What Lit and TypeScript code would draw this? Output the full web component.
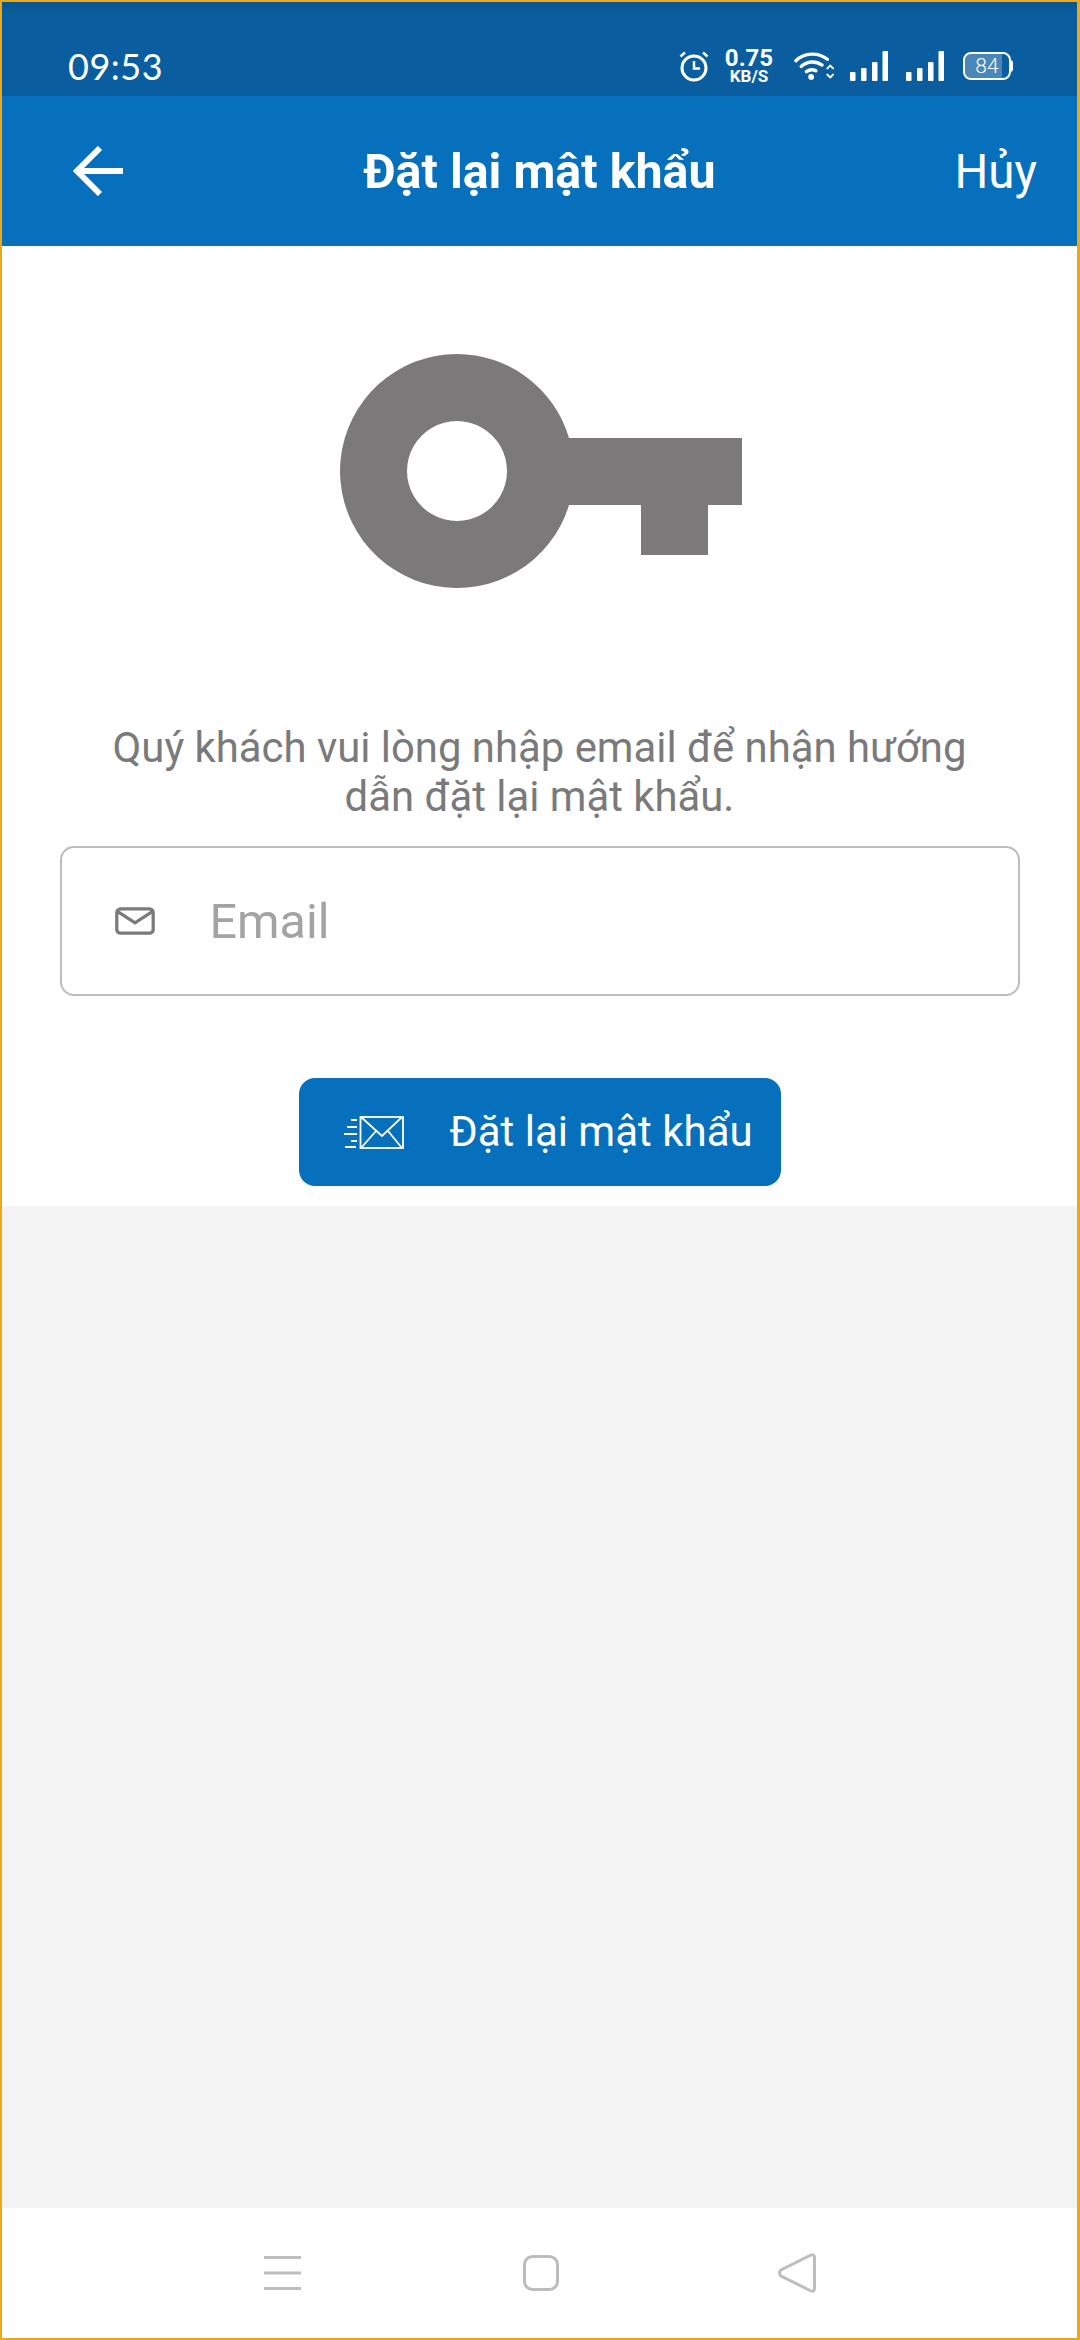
import { LitElement, html, css } from "lit";
import { customElement } from "lit/decorators.js";

@customElement("app-root")
export class AppRoot extends LitElement {
  static styles = css`
    :host { display: block; width: 1080px; height: 2340px; box-sizing: border-box; border: 2px solid #eba91a; border-right-width: 3px; font-family: Roboto, "Liberation Sans", sans-serif; background: #fff; overflow: hidden; }
    .page { display: flex; flex-direction: column; height: 100%; }
    .status { height: 94px; flex: none; background: linear-gradient(#07568f 0, #0a5e9f 14px, #0a5e9f 100%); display: flex; align-items: center; padding: 34px 64px 0 66px; color: #fff; box-sizing: border-box; }
    .time { font-family: Lato, sans-serif; font-size: 36px; letter-spacing: 0.5px; line-height: 1; flex: 1; }
    .status-icons { display: flex; align-items: center; }
    .status-icons svg { display: block; }
    .speed { display: flex; flex-direction: column; align-items: center; font-weight: 700; width: 48px; margin: 0 21px 0 16px; }
    .speed .v { font-size: 24px; height: 21px; line-height: 21px; }
    .speed .u { font-size: 17px; height: 15px; line-height: 15px; }
    .bat { position: relative; width: 50px; height: 28px; margin-left: 19px; }
    .bat-box { box-sizing: border-box; width: 48px; height: 28px; border: 2.5px solid #fff; border-radius: 8px; overflow: hidden; position: relative; display: flex; align-items: center; justify-content: center; font-size: 21px; font-weight: 300; color: #fff; }
    .bat-fill { position: absolute; left: 0; top: 0; bottom: 0; width: 84%; background: rgba(255,255,255,.26); }
    .bat-num { position: relative; line-height: 1; }
    .bat-tip { position: absolute; right: 0; top: 8px; width: 3px; height: 12px; background: #fff; border-radius: 0 3px 3px 0; }
    .bar { height: 150px; flex: none; background: #0770bc; color: #fff; display: flex; align-items: center; justify-content: space-between; padding: 0 40px 0 71px; position: relative; box-sizing: border-box; }
    .bar h1 { margin: 0; font-size: 48.4px; font-weight: 700; position: absolute; left: 0; right: 0; top: 51px; text-align: center; line-height: 50px; pointer-events: none; }
    .cancel { font-size: 47.5px; font-weight: 400; line-height: 50px; margin-top: 2px; }
    .content { background: #fff; flex: none; height: 960px; box-sizing: border-box; display: flex; flex-direction: column; align-items: center; padding-top: 108px; }
    .key { display: block; width: 402px; height: 234px; margin-left: 2px; }
    .desc { margin: 135px 0 0; width: 960px; text-align: center; font-size: 41.85px; line-height: 49px; color: #7a7a7a; }
    .field { margin-top: 25px; width: 960px; height: 150px; box-sizing: border-box; border: 2px solid #bdbdbd; border-radius: 14px; display: flex; align-items: center; padding-left: 52px; align-self: flex-start; margin-left: 58px; }
    .field span { font-size: 48.5px; color: #a3a3a3; margin-left: 53.5px; line-height: 1; margin-top: 2px; }
    .btn { margin-top: 82px; width: 482px; height: 108px; background: #0770bc; border-radius: 16px; color: #fff; display: flex; align-items: center; box-sizing: border-box; padding-left: 45px; font-size: 42px; }
    .btn span { margin-left: 46px; line-height: 1; white-space: nowrap; }
    .fill { flex: 1; background: #f3f3f3; }
    .nav { height: 130px; flex: none; background: #fff; display: flex; align-items: center; padding-left: 262px; box-sizing: border-box; }
    .nav-square { margin-left: 222px; }
    .nav-back { margin-left: 219px; }
  `;

  render() {
    return html`<div class="page">
      <div class="status">
        <div class="time">09:53</div>
        <div class="status-icons">
          <svg width="30" height="32" viewBox="0 0 30 32" fill="none" stroke="#fff" stroke-width="3"><circle cx="15" cy="18" r="12"/><path d="M15 11v7.5h6" stroke-width="2.5"/><path d="M1.5 6.5 6 2.5M28.5 6.5 24 2.5" stroke-width="2.5"/></svg>
          <div class="speed"><div class="v">0.75</div><div class="u">KB/S</div></div>
          <svg width="40" height="30" viewBox="0 0 42 30" fill="none" stroke="#fff" stroke-width="3.5" stroke-linecap="round"><path d="M2 9.5C11 .5 26 .5 35 8"/><path d="M7.5 15.5C14 9.5 23 9.5 29.5 14"/><path d="M13 21c3.5-2.5 7-2.5 10-1"/><circle cx="18" cy="26.5" r="3" fill="#fff" stroke="none"/><path d="M35 17.5l3-3 3 3M35 24l3 3 3-3" stroke-width="2"/></svg>
          <svg style="margin-left:16px" width="38" height="30" viewBox="0 0 38 30" fill="#fff"><rect x="0" y="21" width="5.5" height="9" rx="1"/><rect x="11" y="17" width="5.5" height="13" rx="1"/><rect x="22" y="11" width="5.5" height="19" rx="1"/><rect x="32.5" y="0" width="5.5" height="30" rx="1"/></svg>
          <svg style="margin-left:18px" width="38" height="30" viewBox="0 0 38 30" fill="#fff"><rect x="0" y="21" width="5.5" height="9" rx="1"/><rect x="11" y="17" width="5.5" height="13" rx="1"/><rect x="22" y="11" width="5.5" height="19" rx="1"/><rect x="32.5" y="0" width="5.5" height="30" rx="1"/></svg>
          <div class="bat"><div class="bat-box"><div class="bat-fill"></div><div class="bat-num">84</div></div><div class="bat-tip"></div></div>
        </div>
      </div>
      <div class="bar">
        <svg width="52" height="50" viewBox="0 0 52 50" fill="none" stroke="#fff" stroke-width="6"><path d="M50 25H4M27 2 4 25l23 23"/></svg>
        <h1>Đặt lại mật khẩu</h1>
        <div class="cancel">Hủy</div>
      </div>
      <div class="content">
        <svg class="key" viewBox="0 0 402 234" fill="#7b797a"><path fill-rule="evenodd" d="M117 0a117 117 0 0 1 112 84H402V151H368V201H301V151H229A117 117 0 1 1 117 0ZM117 67a50 50 0 1 0 .01 0Z"/></svg>
        <p class="desc">Quý khách vui lòng nhập email để nhận hướng<br />dẫn đặt lại mật khẩu.</p>
        <div class="field">
          <svg width="42" height="28" viewBox="0 0 43 30" fill="none" stroke="#7b7b7b" stroke-width="3.5"><rect x="2" y="2" width="39" height="26" rx="4"/><path d="M3 5l18.5 12L40 5"/></svg>
          <span>Email</span>
        </div>
        <div class="btn">
          <svg width="60" height="33" viewBox="0 0 60 33" fill="none" stroke="#fff" stroke-width="1.8"><rect x="16.5" y="1" width="42.5" height="31"/><path d="M17 1l21 19L58 1M17 32l15-17M58 32 44 15"/><path d="M7 4h6M3 11h10M0 18h13M7 25h6M1 31h11" stroke-width="2"/></svg>
          <span>Đặt lại mật khẩu</span>
        </div>
      </div>
      <div class="fill"></div>
      <div class="nav">
        <svg width="37" height="34" viewBox="0 0 37 34" fill="#bdbdbd"><rect y="0" width="37" height="3"/><rect y="15.5" width="37" height="3"/><rect y="31" width="37" height="3"/></svg>
        <svg class="nav-square" width="36" height="36" viewBox="0 0 36 36" fill="none" stroke="#bdbdbd" stroke-width="3"><rect x="1.5" y="1.5" width="33" height="33" rx="8"/></svg>
        <svg class="nav-back" width="38" height="40" viewBox="0 0 38 40" fill="none" stroke="#bdbdbd" stroke-width="3"><path d="M32 2.500Q36.500 .5 36.500 4.500V35.500Q36.500 39.500 32 37.500L3 23Q0 20 3 17Z"/></svg>
      </div>
    </div>`;
  }
}
